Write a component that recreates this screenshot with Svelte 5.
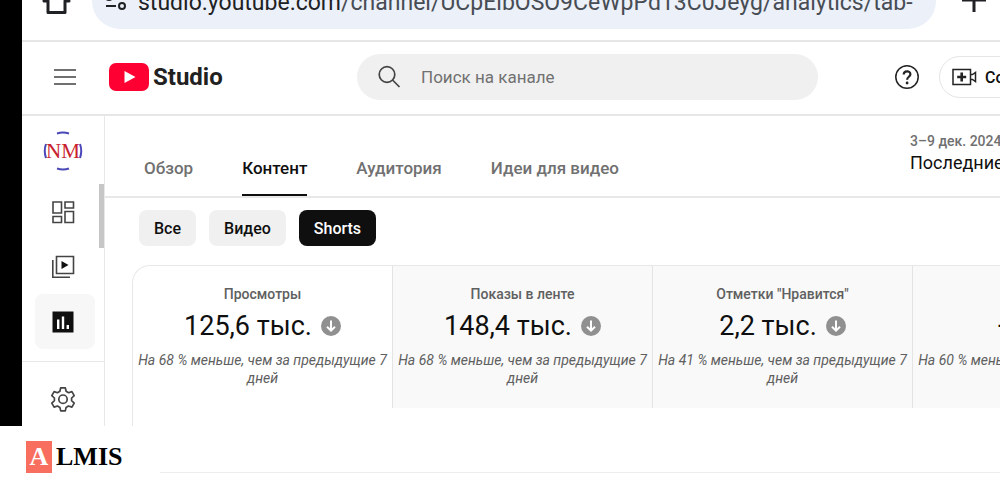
<script lang="ts">
	const tabs = ['Обзор', 'Контент', 'Аудитория', 'Идеи для видео'];
	const chips = ['Все', 'Видео', 'Shorts'];
	const metrics = [
		{ label: 'Просмотры', value: '125,6 тыс.', note: 'На 68 % меньше, чем за предыдущие 7 дней' },
		{ label: 'Показы в ленте', value: '148,4 тыс.', note: 'На 68 % меньше, чем за предыдущие 7 дней' },
		{ label: 'Отметки "Нравится"', value: '2,2 тыс.', note: 'На 41 % меньше, чем за предыдущие 7 дней' },
		{ label: 'Подписчики', value: '+205', note: 'На 60 % меньше, чем за предыдущие 7 дней' }
	];

	let tab = $state('Контент');
	let chip = $state('Shorts');
	let metric = $state(0);
	let query = $state('');
</script>

<div class="screen">
	<div class="browser-bar">
		<button class="bare home" aria-label="Home">
			<svg width="32" height="34" viewBox="0 0 32 34" fill="none" stroke="#202124" stroke-width="3" stroke-linejoin="round">
				<path d="M16 4 4 20h4v11.500h17V20h4z" />
			</svg>
		</button>
		<div class="url">
			<svg width="24" height="20" viewBox="0 0 24 20" fill="none" stroke="#202124" stroke-width="2">
				<circle cx="5" cy="4" r="3" />
				<path d="M11 4h10M2 13h10" />
				<circle cx="18" cy="13" r="3" />
			</svg>
			<span class="address"><b>studio.youtube.com</b>/channel/UCpEibOSO9CeWpPd13C0Jeyg/analytics/tab-</span>
		</div>
		<button class="bare plus" aria-label="New tab">
			<svg width="24" height="24" viewBox="0 0 24 24" stroke="#202124" stroke-width="3">
				<path d="M12 0v24M0 12h24" />
			</svg>
		</button>
	</div>

	<header>
		<button class="bare menu" aria-label="Меню">
			<svg width="22" height="18" viewBox="0 0 22 18" stroke="#707070" stroke-width="2">
				<path d="M0 2h22M0 9h22M0 16h22" />
			</svg>
		</button>
		<a class="logo" href="#studio">
			<svg width="40" height="28" viewBox="0 0 40 28">
				<rect width="40" height="28" rx="7" fill="#ff0033" />
				<path d="M15.500 8v12l11-6z" fill="#fff" />
			</svg>
			Studio
		</a>
		<label class="search">
			<svg width="24" height="24" viewBox="0 0 24 24" fill="none" stroke="#444" stroke-width="1.700">
				<circle cx="10" cy="9.500" r="7.800" />
				<path d="m15.500 15 7 7" />
			</svg>
			<input type="text" placeholder="Поиск на канале" aria-label="Поиск на канале" bind:value={query} />
		</label>
		<button class="bare help" aria-label="Справка">
			<svg width="26" height="26" viewBox="0 0 26 26" fill="none" stroke="#222">
				<circle cx="13" cy="13" r="11.200" stroke-width="1.500" />
				<path d="M9.700 10.600C9.700 6.200 16.400 6.300 16.400 10.200C16.400 12.800 13.100 12.700 13.100 15.800" stroke-width="2.200" />
				<circle cx="13.100" cy="19" r="1.400" fill="#222" stroke="none" />
			</svg>
		</button>
		<div class="create-slot">
			<button class="create">
				<svg width="25" height="18" viewBox="0 0 25 18" fill="none" stroke="#222" stroke-width="1.500">
					<path d="M1 1.500h17.500v15H1zM18.500 6.500h2l3-2v9l-3-2h-2" />
					<path d="M9.700 4.500v9M5.200 9h9" stroke-width="2.600" />
				</svg>
				Создать
			</button>
		</div>
	</header>

	<div class="body">
		<aside>
			<svg class="avatar" width="40" height="40" viewBox="0 0 40 40">
				<g fill="none" stroke="#4a48b8" stroke-width="2">
					<path d="M14 2.500q6-1.800 12 0M14 37.500q6 1.800 12 0" />
					<path d="M3 13q-2.500 7 0 14M37 13q2.500 7 0 14" />
				</g>
				<text x="20" y="27" text-anchor="middle">NM</text>
			</svg>
			<nav>
				<a href="#dashboard" aria-label="Главная">
					<svg width="24" height="24" viewBox="0 0 24 24" fill="none" stroke="#444" stroke-width="1.600">
						<path d="M2 2h8.500v11H2zM14 2h8.500v6H14zM2 16.500h8.500v6H2zM14 11.500h8.500v11H14z" />
					</svg>
				</a>
				<a href="#content" aria-label="Контент">
					<svg width="24" height="24" viewBox="0 0 24 24" fill="none" stroke="#444" stroke-width="1.600">
						<path d="M5.500 1.500h17v17h-17zM1.800 5v17.200H19" />
						<path d="M10.500 6v8l7-4z" fill="#111" stroke="none" />
					</svg>
				</a>
				<a href="#analytics" class="current" aria-label="Аналитика">
					<svg width="24" height="24" viewBox="0 0 24 24">
						<path d="M1.500 1.500h21v21h-21z" fill="#0f0f0f" />
						<path d="M7.200 9.500V19M12 6.500V19M16.800 15V19" stroke="#fff" stroke-width="2.400" />
					</svg>
				</a>
			</nav>
			<hr />
			<nav>
				<a href="#settings" aria-label="Настройки">
					<svg width="26" height="26" viewBox="0 0 26 26" fill="none" stroke="#444" stroke-width="1.700" stroke-linejoin="round">
						<path d="M10.700 1.800h4.600l.8 3.500 2.400 1.400 3.400-1.100 2.300 4-2.600 2.400v2.700l2.600 2.400-2.300 4-3.400-1.100-2.400 1.400-.8 3.500h-4.600l-.8-3.500-2.400-1.400-3.400 1.100-2.300-4 2.600-2.400V12L1.800 9.600l2.300-4 3.400 1.100 2.400-1.400z" />
						<circle cx="13" cy="13.200" r="4.200" />
					</svg>
				</a>
			</nav>
			<span class="thumb"></span>
		</aside>

		<main>
			<div class="tab-bar">
				<nav class="tabs">
					{#each tabs as name}
						<button class="tab" class:active={tab === name} onclick={() => (tab = name)}>{name}</button>
					{/each}
				</nav>
				<div class="period">
					<small>3–9 дек. 2024 г.</small>
					<span>Последние 7 дней</span>
				</div>
			</div>

			<div class="chips">
				{#each chips as name}
					<button class="chip" class:active={chip === name} onclick={() => (chip = name)}>{name}</button>
				{/each}
			</div>

			<div class="metrics">
				{#each metrics as m, i}
					<button class="metric" class:active={metric === i} onclick={() => (metric = i)}>
						<span class="label">{m.label}</span>
						<span class="value">
							{m.value}
							<svg width="20" height="20" viewBox="0 0 20 20" fill="none" stroke="#fff" stroke-width="2">
								<circle cx="10" cy="10" r="10" fill="#909090" stroke="none" />
								<path d="M10 4.500v10M6 10.700l4 4 4-4" />
							</svg>
						</span>
						<span class="note">{m.note}</span>
					</button>
				{/each}
			</div>
		</main>
	</div>
</div>

<footer>
	<a class="almis" href="#almis"><span>A</span>LMIS</a>
	<hr />
</footer>

<style>
	:global(body) {
		background: #fff;
		font-family: Roboto, 'Liberation Sans', sans-serif;
		color: #0f0f0f;
	}

	button,
	input {
		font: inherit;
		color: inherit;
	}

	button {
		padding: 0;
		border: 0;
		cursor: pointer;
	}

	svg {
		display: block;
		flex: none;
	}

	a {
		color: inherit;
		text-decoration: none;
	}

	hr {
		margin: 0;
		border: 0;
		border-top: 1px solid #e8e8e8;
	}

	.bare {
		flex: none;
		background: none;
	}

	.screen {
		border-left: 22px solid #000;
		overflow: hidden;
	}

	/* the top half of the bar is scrolled out of view */
	.browser-bar {
		display: flex;
		align-items: flex-end;
		box-sizing: border-box;
		height: 42px;
		padding: 0 14px 11px 18px;
		border-bottom: 2px solid #e6e6e6;
	}

	.home {
		margin-bottom: 14px;
	}

	.plus {
		margin: 0 0 17px 26px;
	}

	.url {
		flex: 1;
		display: flex;
		align-items: center;
		gap: 10px;
		box-sizing: border-box;
		min-width: 0;
		height: 56px;
		margin-left: 20px;
		padding: 3px 12px 0;
		border-radius: 28px;
		background: #ebf0f9;
	}

	.address {
		overflow: hidden;
		font-size: 23px;
		line-height: 32px;
		white-space: nowrap;
		color: #474c54;
	}

	.address b {
		font-weight: 400;
		color: #202124;
	}

	header {
		display: flex;
		align-items: center;
		height: 70px;
		padding: 0 0 2px 32px;
		border-bottom: 2px solid #e6e6e6;
	}

	.logo {
		display: flex;
		align-items: center;
		gap: 4px;
		width: 114px;
		margin: 0 134px 0 33px;
		font-size: 24px;
		font-weight: 700;
		color: #212121;
	}

	.search {
		flex: 1;
		display: flex;
		align-items: center;
		gap: 20px;
		box-sizing: border-box;
		min-width: 0;
		height: 46px;
		padding: 0 20px;
		border-radius: 23px;
		background: #f0f0f0;
	}

	.search input {
		flex: 1;
		min-width: 0;
		padding: 0;
		border: 0;
		outline: none;
		background: none;
		font-size: 17px;
	}

	.search input::placeholder {
		color: #717171;
		opacity: 1;
	}

	.help {
		margin: 0 19px 0 76px;
	}

	.create-slot {
		flex: 0 0 61px;
		min-width: 0;
	}

	.create {
		display: flex;
		align-items: center;
		gap: 8px;
		height: 42px;
		padding: 0 18px 0 12px;
		border: 1px solid #e5e5e5;
		border-radius: 21px;
		background: #fff;
		font-size: 16px;
		font-weight: 500;
	}

	.body {
		display: flex;
	}

	aside {
		position: relative;
		flex: 0 0 82px;
		padding-top: 15px;
		border-right: 1px solid #e8e8e8;
	}

	.avatar {
		margin: 0 auto 13px 21px;
	}

	.avatar text {
		font: 21px 'Liberation Serif', serif;
		fill: #c8202c;
	}

	aside nav a {
		display: flex;
		align-items: center;
		justify-content: center;
		box-sizing: border-box;
		height: 55px;
		margin: 0 9px 0 13px;
		padding-right: 4px;
		border-radius: 8px;
	}

	aside nav a.current {
		background: #f7f7f7;
	}

	aside hr {
		margin: 12px 0 9px;
	}

	.thumb {
		position: absolute;
		top: 68px;
		right: 0;
		width: 5px;
		height: 64px;
		background: #c6c6c6;
	}

	main {
		flex: 1;
		display: flex;
		flex-direction: column;
		min-width: 0;
	}

	.tab-bar {
		display: flex;
		justify-content: space-between;
		height: 80px;
		padding-left: 39px;
		border-bottom: 2px solid #e8e8e8;
	}

	.tabs {
		display: flex;
		gap: 49px;
	}

	.tab {
		padding-top: 26px;
		border-bottom: 2px solid transparent;
		background: none;
		font-size: 17px;
		font-weight: 500;
		color: #707070;
	}

	.tab.active {
		border-color: #0f0f0f;
		color: #0f0f0f;
	}

	.period {
		flex: 0 0 90px;
		min-width: 0;
		padding-top: 15px;
		font-size: 18px;
		line-height: 24px;
		white-space: nowrap;
	}

	.period small {
		display: block;
		font-size: 14px;
		font-weight: 500;
		line-height: 20px;
		color: #707070;
	}

	.chips {
		display: flex;
		gap: 13px;
		padding: 12px 0 19px 34px;
	}

	.chip {
		height: 36px;
		padding: 0 15px;
		border-radius: 8px;
		background: #f0f0f0;
		font-size: 16px;
		font-weight: 500;
	}

	.chip.active {
		background: #0f0f0f;
		color: #fff;
	}

	.metrics {
		flex: 1;
		display: flex;
		align-items: flex-start;
		margin-left: 27px;
		border: 1px solid #e8e8e8;
		border-width: 1px 0 0 1px;
		border-top-left-radius: 18px;
	}

	.metric {
		flex: 0 0 260px;
		display: flex;
		flex-direction: column;
		align-items: center;
		box-sizing: border-box;
		height: 142px;
		padding-top: 18px;
		border-right: 1px solid #e4e4e4;
		background: #f9f9f9;
	}

	.metric.active {
		background: none;
	}

	.label {
		font-size: 14px;
		font-weight: 500;
		line-height: 20px;
		color: #606060;
	}

	.value {
		display: flex;
		align-items: center;
		gap: 9px;
		margin-bottom: 3px;
		font-size: 27px;
		line-height: 44px;
	}

	.note {
		font-size: 14px;
		font-style: italic;
		line-height: 18px;
		color: #606060;
	}

	footer {
		display: flex;
		align-items: flex-end;
		gap: 38px;
		padding: 15px 0 27px 26px;
	}

	footer hr {
		flex: 1;
		border-color: #ededed;
	}

	.almis {
		display: flex;
		align-items: center;
		gap: 4px;
		font: 700 26px/32px 'Liberation Serif', serif;
		color: #000;
	}

	.almis span {
		width: 26px;
		background: #f96f5f;
		color: #fff;
		text-align: center;
	}
</style>
